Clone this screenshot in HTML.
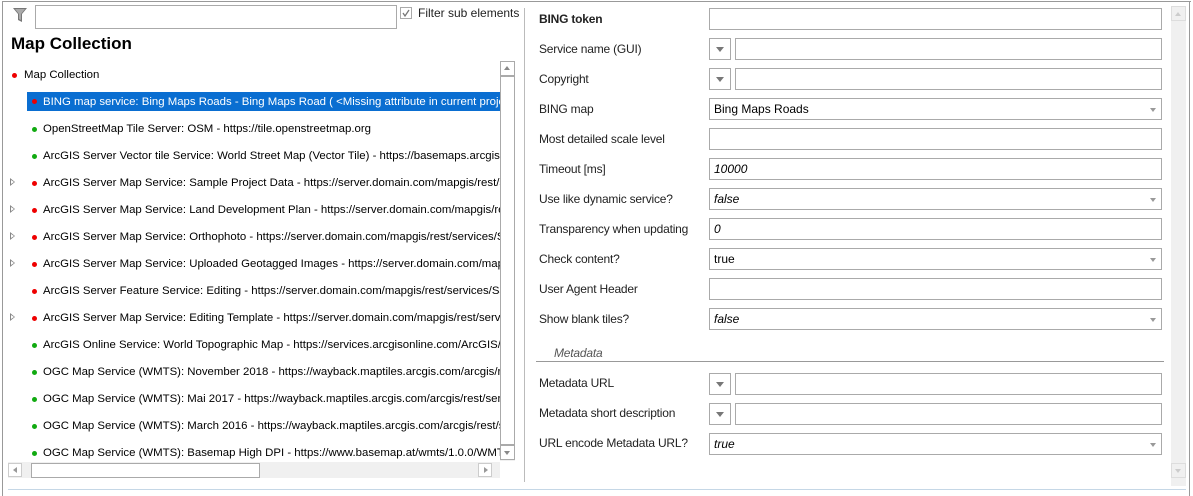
<!DOCTYPE html>
<html><head><meta charset="utf-8"><style>
*{margin:0;padding:0;box-sizing:border-box}
body{width:1193px;height:496px;background:#fff;position:relative;overflow:hidden;font-family:"Liberation Sans",sans-serif;font-size:11.4px;color:#000}
.a{position:absolute}
.row{position:absolute;left:0;white-space:nowrap;height:18px;line-height:18px}
.dot{position:absolute;width:5px;height:5px;border-radius:50%;top:7px}
.r{background:#e00}.g{background:#1a1}
.exp{position:absolute;left:10px;top:4px;width:0;height:0;border-left:5px solid #888;border-top:4px solid transparent;border-bottom:4px solid transparent}
.exp::after{content:"";position:absolute;left:-4px;top:-2px;border-left:3px solid #fff;border-top:2px solid transparent;border-bottom:2px solid transparent}
.lbl{position:absolute;left:539px;font-size:12px;color:#222;font-family:"Liberation Sans Narrow","Liberation Sans",sans-serif;letter-spacing:-0.2px}
.inp{position:absolute;left:709px;width:453px;height:22px;border:1px solid #aaa;background:#fff;font-size:12px;line-height:20px;padding-left:4px;font-family:"Liberation Sans Narrow","Liberation Sans",sans-serif}
.dd{position:absolute;left:709px;width:22px;height:22px;border:1px solid #aaa}
.dd::after,.sel::after{content:"";position:absolute;border-top:5px solid #777;border-left:4px solid transparent;border-right:4px solid transparent}
.dd::after{left:6px;top:8px}
.inp2{position:absolute;left:735px;width:427px;height:22px;border:1px solid #aaa}
.sel::after{right:5px;top:9px;border-top-width:4px;border-left-width:3px;border-right-width:3px;border-top-color:#999}
i{font-style:italic}
</style></head><body>
<div class="a" style="left:2px;top:1px;width:1189px;height:1px;background:#999"></div>
<div class="a" style="left:2px;top:1px;width:1px;height:495px;background:#999"></div>
<div class="a" style="left:1189px;top:1px;width:1px;height:495px;background:#999"></div>
<svg class="a" style="left:12px;top:7px" width="16" height="16" viewBox="0 0 16 16"><path d="M1 1h14l-5 6v8l-4-2V7z" fill="#777"/><path d="M3 2h10l-4 5v6l-2-1V7z" fill="#aaa"/></svg>
<div class="a" style="left:35px;top:5px;width:362px;height:24px;border:1px solid #aaa"></div>
<div class="a" style="left:400px;top:7px;width:12px;height:12px;border:1px solid #aaa"></div>
<svg class="a" style="left:401px;top:8px" width="10" height="10"><path d="M2 5l2 3 4-6" stroke="#777" stroke-width="1.3" fill="none"/></svg>
<div class="a" style="left:418px;top:6px;font-size:12px;color:#222">Filter sub elements</div>
<div class="a" style="left:11px;top:34px;font-size:17px;font-weight:bold">Map Collection</div>
<div class="a" style="left:0;top:66px;width:500px;height:395px;overflow:hidden">
<div class="row" style="top:0"><span class="dot r" style="left:12px"></span><span style="position:absolute;left:24px">Map Collection</span></div>
<div class="row" style="top:26px;left:27px;width:473px;background:#0a6ed1;color:#fff;height:19px"><span class="dot r" style="left:5px"></span><span style="position:absolute;left:16px;top:1px">BING map service: Bing Maps Roads - Bing Maps Road ( &lt;Missing attribute in current project&gt; )</span></div>
<div class="row" style="top:54px"><span class="dot g" style="left:32px"></span><span style="position:absolute;left:43px">OpenStreetMap Tile Server: OSM - https://tile.openstreetmap.org</span></div>
<div class="row" style="top:81px"><span class="dot g" style="left:32px"></span><span style="position:absolute;left:43px">ArcGIS Server Vector tile Service: World Street Map (Vector Tile) - https://basemaps.arcgis.com</span></div>
<div class="row" style="top:108px"><span class="exp"></span><span class="dot r" style="left:32px"></span><span style="position:absolute;left:43px">ArcGIS Server Map Service: Sample Project Data - https://server.domain.com/mapgis/rest/services</span></div>
<div class="row" style="top:135px"><span class="exp"></span><span class="dot r" style="left:32px"></span><span style="position:absolute;left:43px">ArcGIS Server Map Service: Land Development Plan - https://server.domain.com/mapgis/rest/services</span></div>
<div class="row" style="top:162px"><span class="exp"></span><span class="dot r" style="left:32px"></span><span style="position:absolute;left:43px">ArcGIS Server Map Service: Orthophoto - https://server.domain.com/mapgis/rest/services/Sample</span></div>
<div class="row" style="top:189px"><span class="exp"></span><span class="dot r" style="left:32px"></span><span style="position:absolute;left:43px">ArcGIS Server Map Service: Uploaded Geotagged Images - https://server.domain.com/mapgis/rest</span></div>
<div class="row" style="top:216px"><span class="dot r" style="left:32px"></span><span style="position:absolute;left:43px">ArcGIS Server Feature Service: Editing - https://server.domain.com/mapgis/rest/services/Sample</span></div>
<div class="row" style="top:243px"><span class="exp"></span><span class="dot r" style="left:32px"></span><span style="position:absolute;left:43px">ArcGIS Server Map Service: Editing Template - https://server.domain.com/mapgis/rest/services</span></div>
<div class="row" style="top:270px"><span class="dot g" style="left:32px"></span><span style="position:absolute;left:43px">ArcGIS Online Service: World Topographic Map - https://services.arcgisonline.com/ArcGIS/rest</span></div>
<div class="row" style="top:297px"><span class="dot g" style="left:32px"></span><span style="position:absolute;left:43px">OGC Map Service (WMTS): November 2018 - https://wayback.maptiles.arcgis.com/arcgis/rest</span></div>
<div class="row" style="top:324px"><span class="dot g" style="left:32px"></span><span style="position:absolute;left:43px">OGC Map Service (WMTS): Mai 2017 - https://wayback.maptiles.arcgis.com/arcgis/rest/services</span></div>
<div class="row" style="top:351px"><span class="dot g" style="left:32px"></span><span style="position:absolute;left:43px">OGC Map Service (WMTS): March 2016 - https://wayback.maptiles.arcgis.com/arcgis/rest/services</span></div>
<div class="row" style="top:378px"><span class="dot g" style="left:32px"></span><span style="position:absolute;left:43px">OGC Map Service (WMTS): Basemap High DPI - https://www.basemap.at/wmts/1.0.0/WMTSCapabilities</span></div>
</div>
<div class="a" style="left:500px;top:61px;width:15px;height:400px;background:#f0f0f0"></div>
<div class="a" style="left:500px;top:61px;width:15px;height:15px;border:1px solid #aaa;background:#fff"></div>
<div class="a" style="left:504px;top:66px;border-bottom:4px solid #888;border-left:3px solid transparent;border-right:3px solid transparent"></div>
<div class="a" style="left:500px;top:76px;width:15px;height:369px;border:1px solid #aaa;background:#fff"></div>
<div class="a" style="left:500px;top:445px;width:15px;height:15px;border:1px solid #aaa;background:#fff"></div>
<div class="a" style="left:504px;top:451px;border-top:4px solid #888;border-left:3px solid transparent;border-right:3px solid transparent"></div>
<div class="a" style="left:8px;top:462px;width:492px;height:16px;background:#f0f0f0"></div>
<div class="a" style="left:8px;top:463px;width:14px;height:14px;border:1px solid #ccc;background:#fff"></div>
<div class="a" style="left:13px;top:467px;border-right:4px solid #999;border-top:3px solid transparent;border-bottom:3px solid transparent"></div>
<div class="a" style="left:31px;top:463px;width:229px;height:15px;border:1px solid #aaa;background:#fff"></div>
<div class="a" style="left:478px;top:463px;width:14px;height:14px;border:1px solid #ccc;background:#fff"></div>
<div class="a" style="left:484px;top:467px;border-left:4px solid #999;border-top:3px solid transparent;border-bottom:3px solid transparent"></div>
<div class="a" style="left:524px;top:8px;width:1px;height:474px;background:#bbb"></div>
<div class="a" style="left:8px;top:489px;width:1178px;height:1px;background:#c5d7e6"></div>
<div class="lbl" style="top:12px;font-weight:bold">BING token</div><div class="inp" style="top:8px"></div>
<div class="lbl" style="top:42px">Service name (GUI)</div><div class="dd" style="top:38px"></div><div class="inp2" style="top:38px"></div>
<div class="lbl" style="top:72px">Copyright</div><div class="dd" style="top:68px"></div><div class="inp2" style="top:68px"></div>
<div class="lbl" style="top:102px">BING map</div><div class="inp sel" style="top:98px">Bing Maps Roads</div>
<div class="lbl" style="top:132px">Most detailed scale level</div><div class="inp" style="top:128px"></div>
<div class="lbl" style="top:162px">Timeout [ms]</div><div class="inp" style="top:158px"><i>10000</i></div>
<div class="lbl" style="top:192px">Use like dynamic service?</div><div class="inp sel" style="top:188px"><i>false</i></div>
<div class="lbl" style="top:222px">Transparency when updating</div><div class="inp" style="top:218px"><i>0</i></div>
<div class="lbl" style="top:252px">Check content?</div><div class="inp sel" style="top:248px">true</div>
<div class="lbl" style="top:282px">User Agent Header</div><div class="inp" style="top:278px"></div>
<div class="lbl" style="top:312px">Show blank tiles?</div><div class="inp sel" style="top:308px"><i>false</i></div>
<div class="lbl" style="top:346px;left:554px;color:#555"><i>Metadata</i></div>
<div class="a" style="left:536px;top:361px;width:628px;height:1px;background:#999"></div>
<div class="lbl" style="top:376px">Metadata URL</div><div class="dd" style="top:373px"></div><div class="inp2" style="top:373px"></div>
<div class="lbl" style="top:406px">Metadata short description</div><div class="dd" style="top:403px"></div><div class="inp2" style="top:403px"></div>
<div class="lbl" style="top:436px">URL encode Metadata URL?</div><div class="inp sel" style="top:433px"><i>true</i></div>
<div class="a" style="left:1171px;top:6px;width:15px;height:480px;background:#f0f0f0"></div>
<div class="a" style="left:1171px;top:6px;width:15px;height:15px;border:1px solid #ddd"></div>
<div class="a" style="left:1175px;top:12px;border-bottom:4px solid #ccc;border-left:3px solid transparent;border-right:3px solid transparent"></div>
<div class="a" style="left:1171px;top:463px;width:15px;height:15px;border:1px solid #ddd"></div>
<div class="a" style="left:1175px;top:469px;border-top:4px solid #ccc;border-left:3px solid transparent;border-right:3px solid transparent"></div>
</body></html>
